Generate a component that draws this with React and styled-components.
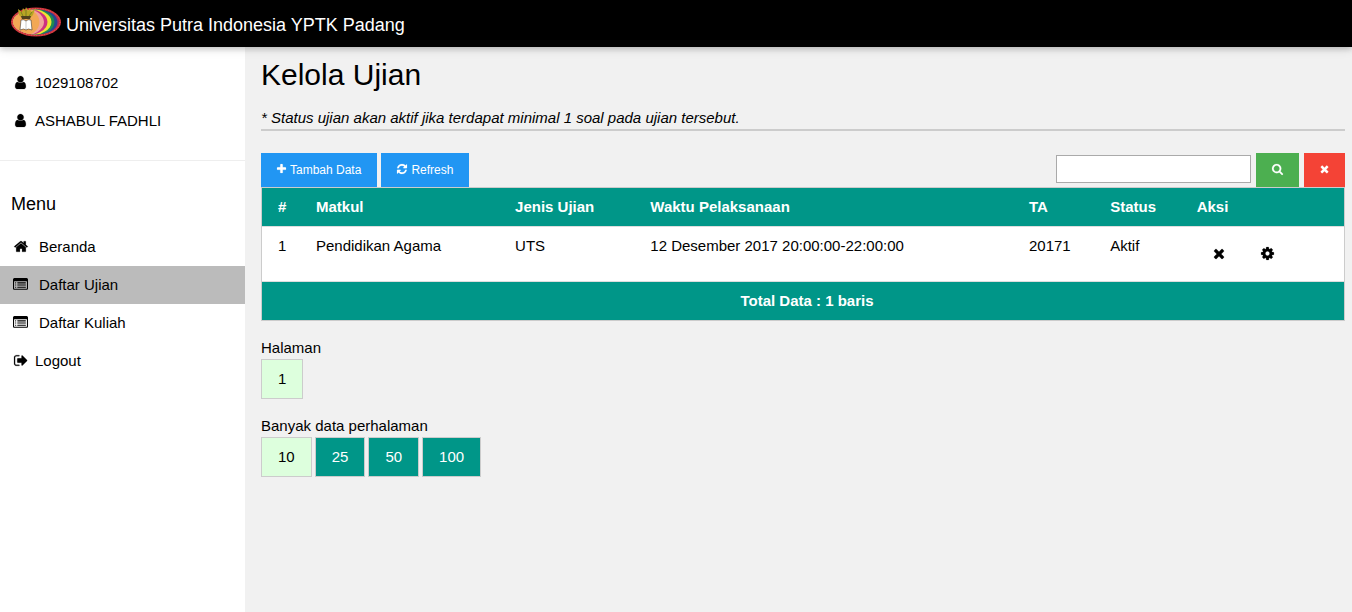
import React from "react";
import styled, { createGlobalStyle } from "styled-components";

const GlobalStyle = createGlobalStyle`
  *, *::before, *::after { box-sizing: border-box; }
  body {
    margin: 0;
    background: #f1f1f1;
    color: #000;
    font-family: "Liberation Sans", Arial, sans-serif;
    font-size: 15px;
    line-height: 22px;
  }
  button, input { font-family: inherit; }
`;

/* Icon outlines on a 1792-unit grid: [left edge, advance width, path] */
const glyphs = {
  user: [256, 1280, "M1536 1399q0 109-62.5 187t-150.5 78h-854q-88 0-150.5-78t-62.5-187q0-85 8.5-160.5t31.5-152 58.5-131 94-89 134.5-34.5q131 128 313 128t313-128q76 0 134.5 34.5t94 89 58.5 131 31.5 152 8.5 160.5zm-256-887q0 159-112.5 271.5t-271.5 112.5-271.5-112.5-112.5-271.5 112.5-271.5 271.5-112.5 271.5 112.5 112.5 271.5z"],
  home: [64, 1664, "M1472 992v480q0 26-19 45t-45 19h-384v-384h-256v384h-384q-26 0-45-19t-19-45v-480q0-1 .5-3t.5-3l575-474 575 474q1 2 1 6zm223-69l-62 74q-8 9-21 11h-3q-13 0-21-7l-692-577-692 577q-12 8-24 7-13-2-21-11l-62-74q-8-10-7-23.5t11-21.5l719-599q32-26 76-26t76 26l244 204v-195q0-14 9-23t23-9h192q14 0 23 9t9 23v408l219 182q10 8 11 21.5t-7 23.5z"],
  list: [0, 1792, "M384 1184v64q0 13-9.5 22.5t-22.5 9.5h-64q-13 0-22.5-9.5t-9.5-22.5v-64q0-13 9.5-22.5t22.5-9.5h64q13 0 22.5 9.5t9.5 22.5zm0-256v64q0 13-9.5 22.5t-22.5 9.5h-64q-13 0-22.5-9.5t-9.5-22.5v-64q0-13 9.5-22.5t22.5-9.5h64q13 0 22.5 9.5t9.5 22.5zm0-256v64q0 13-9.5 22.5t-22.5 9.5h-64q-13 0-22.5-9.5t-9.5-22.5v-64q0-13 9.5-22.5t22.5-9.5h64q13 0 22.5 9.5t9.5 22.5zm1152 512v64q0 13-9.5 22.5t-22.5 9.5h-960q-13 0-22.5-9.5t-9.5-22.5v-64q0-13 9.5-22.5t22.5-9.5h960q13 0 22.5 9.5t9.5 22.5zm0-256v64q0 13-9.5 22.5t-22.5 9.5h-960q-13 0-22.5-9.5t-9.5-22.5v-64q0-13 9.5-22.5t22.5-9.5h960q13 0 22.5 9.5t9.5 22.5zm0-256v64q0 13-9.5 22.5t-22.5 9.5h-960q-13 0-22.5-9.5t-9.5-22.5v-64q0-13 9.5-22.5t22.5-9.5h960q13 0 22.5 9.5t9.5 22.5zm128 704v-832q0-13-9.5-22.5t-22.5-9.5h-1472q-13 0-22.5 9.5t-9.5 22.5v832q0 13 9.5 22.5t22.5 9.5h1472q13 0 22.5-9.5t9.5-22.5zm128-1088v1088q0 66-47 113t-113 47h-1472q-66 0-113-47t-47-113v-1088q0-66 47-113t113-47h1472q66 0 113 47t47 113z"],
  signOut: [64, 1664, "M704 1440q0 4 1 20t.5 26.5-3 23.5-10 19.5-20.5 6.5h-320q-119 0-203.5-84.5t-84.5-203.5v-704q0-119 84.5-203.5t203.5-84.5h320q13 0 22.5 9.5t9.5 22.5q0 4 1 20t.5 26.5-3 23.5-10 19.5-20.5 6.5h-320q-66 0-113 47t-47 113v704q0 66 47 113t113 47h312l11.5 1 11.5 3 8 5.5 7 9 2 13.5zm928-544q0 26-19 45l-544 544q-19 19-45 19t-45-19-19-45v-288h-448q-26 0-45-19t-19-45v-384q0-26 19-45t45-19h448v-288q0-26 19-45t45-19 45 19l544 544q19 19 19 45z"],
  plus: [192, 1408, "M1600 736v192q0 40-28 68t-68 28h-416v416q0 40-28 68t-68 28h-192q-40 0-68-28t-28-68v-416h-416q-40 0-68-28t-28-68v-192q0-40 28-68t68-28h416v-416q0-40 28-68t68-28h192q40 0 68 28t28 68v416h416q40 0 68 28t28 68z"],
  refresh: [128, 1536, "M1639 1056q0 5-1 7-64 268-268 434.5t-478 166.5q-146 0-282.5-55t-243.5-157l-129 129q-19 19-45 19t-45-19-19-45v-448q0-26 19-45t45-19h448q26 0 45 19t19 45-19 45l-137 137q71 66 161 102t187 36q134 0 250-65t186-179q11-17 53-117 8-23 30-23h192q13 0 22.5 9.5t9.5 22.5zm25-800v448q0 26-19 45t-45 19h-448q-26 0-45-19t-19-45 19-45l138-138q-148-137-349-137-134 0-250 65t-186 179q-11 17-53 117-8 23-30 23h-199q-13 0-22.5-9.5t-9.5-22.5v-7q65-268 270-434.5t480-166.5q146 0 284 55.5t245 156.5l130-129q19-19 45-19t45 19 19 45z"],
  search: [64, 1664, "M1216 832q0-185-131.5-316.5t-316.5-131.5-316.5 131.5-131.5 316.5 131.5 316.5 316.5 131.5 316.5-131.5 131.5-316.5zm512 832q0 52-38 90t-90 38q-54 0-90-38l-343-342q-179 124-399 124-143 0-273.5-55.5t-225-150-150-225-55.5-273.5 55.5-273.5 150-225 225-150 273.5-55.5 273.5 55.5 225 150 150 225 55.5 273.5q0 220-124 399l343 343q37 37 37 90z"],
  times: [192, 1408, "M1490 1322q0 40-28 68l-136 136q-28 28-68 28t-68-28l-294-294-294 294q-28 28-68 28t-68-28l-136-136q-28-28-28-68t28-68l294-294-294-294q-28-28-28-68t28-68l136-136q28-28 68-28t68 28l294 294 294-294q28-28 68-28t68 28l136 136q28 28 28 68t-28 68l-294 294 294 294q28 28 28 68z"],
  cog: [128, 1536, "M1152 896q0-106-75-181t-181-75-181 75-75 181 75 181 181 75 181-75 75-181zm512-109v222q0 12-8 23t-20 13l-185 28q-19 54-39 91 35 50 107 138 10 12 10 25t-9 23q-27 37-99 108t-94 71q-12 0-26-9l-138-108q-44 23-91 38-16 136-29 186-7 28-36 28h-222q-14 0-24.5-8.5t-11.5-21.5l-28-184q-49-16-90-37l-141 107q-10 9-25 9-14 0-25-11-126-114-165-168-7-10-7-23 0-12 8-23 15-21 51-66.5t54-70.5q-27-50-41-99l-183-27q-13-2-21-12.5t-8-23.5v-222q0-12 8-23t19-13l186-28q14-46 39-92-40-57-107-138-10-12-10-24 0-10 9-23 26-36 98.5-107.5t94.5-71.5q13 0 26 10l138 107q44-23 91-38 16-136 29-186 7-28 36-28h222q14 0 24.5 8.5t11.5 21.5l28 184q49 16 90 37l142-107q9-9 24-9 13 0 25 10 129 119 165 170 7 8 7 22 0 12-8 23-15 21-51 66.5t-54 70.5q26 50 41 98l183 28q13 2 21 12.5t8 23.5z"],
};

const Glyph = styled.svg`
  display: block;
  flex: none;
  margin-bottom: 2px;
  fill: currentColor;
  stroke: currentColor;
  stroke-width: ${(p) => p.$weight}px;
  overflow: visible;
`;

function Icon({ name, size, weight = 24 }) {
  const [left, advance, d] = glyphs[name];
  return (
    <Glyph
      $weight={weight}
      width={Math.round((advance * size) / 1792)}
      height={size}
      viewBox={`${left} 0 ${advance} 1792`}
      aria-hidden="true"
    >
      <path d={d} />
    </Glyph>
  );
}

const Page = styled.div`
  min-height: 100vh;
  display: flex;
  flex-direction: column;
`;

const TopBar = styled.header`
  position: relative;
  z-index: 1;
  display: flex;
  align-items: flex-start;
  gap: 5px;
  padding: 7px 11px 9px;
  background: #000;
  color: #fff;
  box-shadow: 0 2px 5px rgba(0, 0, 0, 0.16), 0 2px 10px rgba(0, 0, 0, 0.12);
`;

const LogoArt = styled.svg`
  display: block;
  flex: none;
`;

const SiteName = styled.span`
  padding-top: 6px;
  font-size: 18px;
  line-height: 25px;
`;

const Body = styled.div`
  flex: 1;
  display: flex;
`;

const Sidebar = styled.aside`
  flex: none;
  width: 245px;
  padding-top: 17px;
  background: #fff;
`;

const Profile = styled.div`
  padding-bottom: 20px;
  border-bottom: 1px solid #eee;
`;

const itemLayout = `
  display: flex;
  align-items: center;
  padding: 8px 11px;
`;

const ProfileLine = styled.div`
  ${itemLayout}
  gap: 5px;
`;

const MenuTitle = styled.h2`
  margin: 31px 11px 11px;
  font-size: 18px;
  line-height: 25px;
  font-weight: 400;
`;

const MenuLink = styled.a`
  ${itemLayout}
  gap: ${(p) => (p.$wide ? 9 : 5)}px;
  background: ${(p) => (p.$active ? "#bbb" : "transparent")};
  color: inherit;
  text-decoration: none;
`;

const IconSlot = styled.span`
  flex: none;
  width: 19px;
  display: flex;
  justify-content: center;
`;

const Main = styled.main`
  flex: 1;
  min-width: 0;
  padding: 5px 7px 16px 16px;
`;

const Heading = styled.h1`
  margin: 0 0 10px;
  font-size: 30px;
  line-height: 45px;
  font-weight: 400;
`;

const Note = styled.p`
  margin: 0 0 22px;
  border-bottom: 2px solid #ccc;
  font-style: italic;
`;

const Toolbar = styled.div`
  display: flex;
  justify-content: space-between;
`;

const ButtonGroup = styled.div`
  display: flex;
  gap: 4px;
`;

const SearchForm = styled.form`
  display: flex;
  gap: 5px;
`;

const SearchInput = styled.input`
  width: 195px;
  height: 28px;
  margin: 2px 0;
  padding: 0 4px;
  border: 1px solid #aaa;
  background: #fff;
  font-size: 15px;
`;

const tones = { blue: "#2196f3", green: "#4caf50", red: "#f44336" };

const Button = styled.button`
  display: flex;
  align-items: center;
  gap: 4px;
  padding: 8px 16px;
  border: 0;
  background: ${(p) => tones[p.$tone]};
  color: #fff;
  font-size: 12px;
  line-height: 18px;
`;

const Table = styled.table`
  width: 100%;
  table-layout: fixed;
  border: 1px solid #ccc;
  border-collapse: separate;
  border-spacing: 0;
  background: #fff;
  text-align: left;

  th, td { padding: 8px; vertical-align: top; }
  th:first-child, td:first-child { padding-left: 16px; }
  thead th, tbody td { border-bottom: 1px solid #ddd; }
  thead, tfoot { background: #009688; color: #fff; }
  tfoot td { text-align: center; font-weight: 700; }
`;

const Column = styled.col`
  width: ${(p) => p.$width};
`;

const RowActions = styled.div`
  display: flex;
  gap: 4px;
`;

const RowAction = styled.button`
  display: flex;
  align-items: center;
  height: 38px;
  padding: 0 16px;
  border: 0;
  background: none;
  color: inherit;
`;

const PagerBlock = styled.nav`
  margin-top: 16px;
`;

const PagerList = styled.div`
  display: flex;
  gap: 3px;
`;

const PagerLink = styled.a`
  padding: 8px 16px;
  border: 1px solid #ccc;
  background: ${(p) => (p.$active ? "#dfd" : "#009688")};
  color: ${(p) => (p.$active ? "#000" : "#fff")};
  text-decoration: none;
`;

const columns = [
  ["#", "4.25%"],
  ["Matkul", "18.4%"],
  ["Jenis Ujian", "12.5%"],
  ["Waktu Pelaksanaan", "35%"],
  ["TA", "7.5%"],
  ["Status", "8%"],
  ["Aksi", "auto"],
];

const exams = [["1", "Pendidikan Agama", "UTS", "12 Desember 2017 20:00:00-22:00:00", "20171", "Aktif"]];

const menu = [
  { icon: "home", label: "Beranda", wide: true },
  { icon: "list", label: "Daftar Ujian", wide: true, active: true },
  { icon: "list", label: "Daftar Kuliah", wide: true },
  { icon: "signOut", label: "Logout" },
];

function Logo() {
  return (
    <LogoArt width="50" height="30" viewBox="0 0 50 30" role="img" aria-label="Logo UPI YPTK">
      <defs>
        <clipPath id="oval"><ellipse cx="25" cy="15" rx="23" ry="12.500" /></clipPath>
      </defs>
      <ellipse cx="25" cy="15" rx="25" ry="14.500" fill="#cf3038" />
      <ellipse cx="25" cy="15" rx="24" ry="13.500" fill="none" stroke="#dd6a64" strokeWidth=".8" strokeDasharray="1 1.6" />
      <g clipPath="url(#oval)">
        <rect width="50" height="30" fill="#a82a62" />
        <ellipse cx="23" cy="15" rx="23.500" ry="14" fill="#27478f" />
        <ellipse cx="21" cy="15" rx="22.500" ry="13.500" fill="#1f8a50" />
        <ellipse cx="18" cy="15" rx="22.500" ry="13.500" fill="#f1e234" />
        <ellipse cx="14.500" cy="15" rx="22" ry="13.500" fill="#cf2f80" />
        <ellipse cx="11" cy="15" rx="22" ry="14" fill="#f0a39a" />
        <ellipse cx="9" cy="15" rx="19.500" ry="15" fill="#f2a855" />
      </g>
      <path d="M7 2l4 3 1-4 2 3 1-4 2 4 2-3 1 4 4-3-2 6-3 3h-8l-3-3z" fill="#b9a724" />
      <path d="M10 5l2 4M15 3v6M21 5l-3 4" stroke="#6d741f" strokeWidth=".8" fill="none" />
      <path d="M10 9h10l-1 3h-8z" fill="#51421c" />
      <path d="M10 13q3-1 5 1 2-2 5-1l1 10q-4-2-6 0-2-2-6 0z" fill="#fff" stroke="#222" strokeWidth=".5" />
      <path d="M15 14v9" stroke="#777" strokeWidth=".4" />
    </LogoArt>
  );
}

export default function App() {
  return (
    <Page>
      <GlobalStyle />
      <TopBar>
        <Logo />
        <SiteName>Universitas Putra Indonesia YPTK Padang</SiteName>
      </TopBar>
      <Body>
        <Sidebar>
          <Profile>
            {["1029108702", "ASHABUL FADHLI"].map((text) => (
              <ProfileLine key={text}>
                <IconSlot><Icon name="user" size={15} /></IconSlot>
                {text}
              </ProfileLine>
            ))}
          </Profile>
          <MenuTitle>Menu</MenuTitle>
          <nav>
            {menu.map((item) => (
              <MenuLink key={item.label} href="#" $wide={item.wide} $active={item.active}>
                <IconSlot><Icon name={item.icon} size={15} weight={item.icon === "list" ? 0 : 24} /></IconSlot>
                {item.label}
              </MenuLink>
            ))}
          </nav>
        </Sidebar>
        <Main>
          <Heading>Kelola Ujian</Heading>
          <Note>* Status ujian akan aktif jika terdapat minimal 1 soal pada ujian tersebut.</Note>
          <Toolbar>
            <ButtonGroup>
              <Button type="button" $tone="blue"><Icon name="plus" size={12} />Tambah Data</Button>
              <Button type="button" $tone="blue"><Icon name="refresh" size={12} />Refresh</Button>
            </ButtonGroup>
            <SearchForm onSubmit={(e) => e.preventDefault()}>
              <SearchInput type="text" aria-label="Cari" />
              <Button type="submit" $tone="green" aria-label="Cari"><Icon name="search" size={12} /></Button>
              <Button type="reset" $tone="red" aria-label="Reset"><Icon name="times" size={12} /></Button>
            </SearchForm>
          </Toolbar>
          <Table>
            <colgroup>
              {columns.map(([name, width]) => <Column key={name} $width={width} />)}
            </colgroup>
            <thead>
              <tr>{columns.map(([name]) => <th key={name} scope="col">{name}</th>)}</tr>
            </thead>
            <tbody>
              {exams.map((exam) => (
                <tr key={exam[0]}>
                  {exam.map((value, i) => <td key={i}>{value}</td>)}
                  <td>
                    <RowActions>
                      <RowAction type="button" aria-label="Hapus"><Icon name="times" size={15} /></RowAction>
                      <RowAction type="button" aria-label="Pengaturan"><Icon name="cog" size={15} /></RowAction>
                    </RowActions>
                  </td>
                </tr>
              ))}
            </tbody>
            <tfoot>
              <tr><td colSpan={columns.length}>Total Data : 1 baris</td></tr>
            </tfoot>
          </Table>
          <PagerBlock aria-label="Halaman">
            Halaman
            <PagerList>
              <PagerLink href="#" $active>1</PagerLink>
            </PagerList>
          </PagerBlock>
          <PagerBlock aria-label="Banyak data perhalaman">
            Banyak data perhalaman
            <PagerList>
              {["10", "25", "50", "100"].map((n) => (
                <PagerLink key={n} href="#" $active={n === "10"}>{n}</PagerLink>
              ))}
            </PagerList>
          </PagerBlock>
        </Main>
      </Body>
    </Page>
  );
}
